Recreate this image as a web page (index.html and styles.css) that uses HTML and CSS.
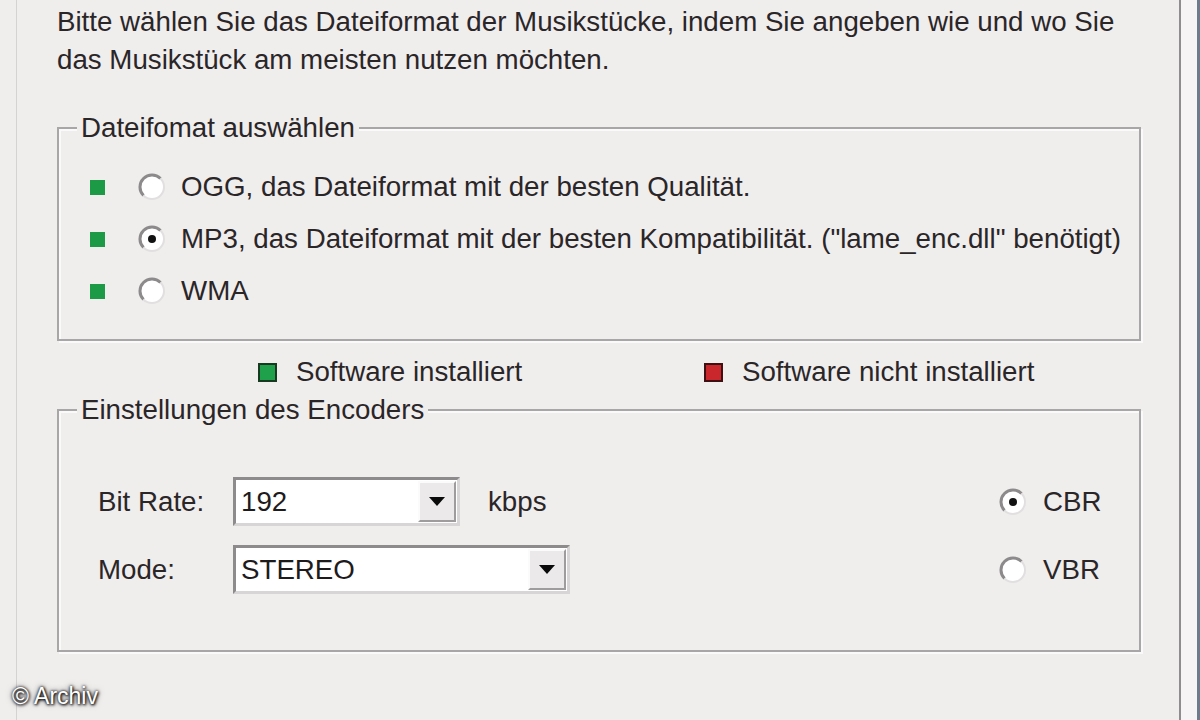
FILE: index.html
```html
<!DOCTYPE html>
<html lang="de">
<head>
<meta charset="utf-8">
<title>Dateiformat</title>
<link rel="stylesheet" href="styles.css">
</head>
<body>
<div class="panel">
  <p class="intro">Bitte wählen Sie das Dateiformat der Musikstücke, indem Sie angeben wie und wo Sie das Musikstück am meisten nutzen möchten.</p>

  <fieldset class="group group-format">
    <legend class="group-title">Dateifomat auswählen</legend>
    <div class="formats">
      <div class="fmt">
        <span class="sq sq-ok"></span>
        <svg class="radio" viewBox="0 0 28 28" width="28" height="28"><circle cx="14" cy="14" r="11.5" fill="#fff"/><path d="M5.5 22.5 A12 12 0 0 1 22.5 5.5" fill="none" stroke="#8d8a8b" stroke-width="3"/><path d="M22.5 5.5 A12 12 0 0 1 5.5 22.5" fill="none" stroke="#e2dfe0" stroke-width="2"/></svg>
        <span class="fmt-text">OGG, das Dateiformat mit der besten Qualität.</span>
      </div>
      <div class="fmt">
        <span class="sq sq-ok"></span>
        <svg class="radio" viewBox="0 0 28 28" width="28" height="28"><circle cx="14" cy="14" r="11.5" fill="#fff"/><path d="M5.5 22.5 A12 12 0 0 1 22.5 5.5" fill="none" stroke="#8d8a8b" stroke-width="3"/><path d="M22.5 5.5 A12 12 0 0 1 5.5 22.5" fill="none" stroke="#e2dfe0" stroke-width="2"/><circle cx="14" cy="14" r="4" fill="#111"/></svg>
        <span class="fmt-text">MP3, das Dateiformat mit der besten Kompatibilität. ("lame_enc.dll" benötigt)</span>
      </div>
      <div class="fmt">
        <span class="sq sq-ok"></span>
        <svg class="radio" viewBox="0 0 28 28" width="28" height="28"><circle cx="14" cy="14" r="11.5" fill="#fff"/><path d="M5.5 22.5 A12 12 0 0 1 22.5 5.5" fill="none" stroke="#8d8a8b" stroke-width="3"/><path d="M22.5 5.5 A12 12 0 0 1 5.5 22.5" fill="none" stroke="#e2dfe0" stroke-width="2"/></svg>
        <span class="fmt-text">WMA</span>
      </div>
    </div>
  </fieldset>

  <div class="status-row">
    <div class="status"><span class="key key-ok"></span><span>Software installiert</span></div>
    <div class="status"><span class="key key-no"></span><span>Software nicht installiert</span></div>
  </div>

  <fieldset class="group group-enc">
    <legend class="group-title">Einstellungen des Encoders</legend>
    <div class="enc">
      <div class="enc-left">
        <div class="enc-row">
          <span class="lbl">Bit Rate:</span>
          <div class="combo combo-rate"><span class="combo-val">192</span><span class="combo-btn"><span class="tri"></span></span></div>
          <span class="unit">kbps</span>
        </div>
        <div class="enc-row">
          <span class="lbl">Mode:</span>
          <div class="combo combo-mode"><span class="combo-val">STEREO</span><span class="combo-btn"><span class="tri"></span></span></div>
        </div>
      </div>
      <div class="modes">
        <div class="mode-row">
          <svg class="radio" viewBox="0 0 28 28" width="28" height="28"><circle cx="14" cy="14" r="11.5" fill="#fff"/><path d="M5.5 22.5 A12 12 0 0 1 22.5 5.5" fill="none" stroke="#8d8a8b" stroke-width="3"/><path d="M22.5 5.5 A12 12 0 0 1 5.5 22.5" fill="none" stroke="#e2dfe0" stroke-width="2"/><circle cx="14" cy="14" r="4" fill="#111"/></svg>
          <span>CBR</span>
        </div>
        <div class="mode-row">
          <svg class="radio" viewBox="0 0 28 28" width="28" height="28"><circle cx="14" cy="14" r="11.5" fill="#fff"/><path d="M5.5 22.5 A12 12 0 0 1 22.5 5.5" fill="none" stroke="#8d8a8b" stroke-width="3"/><path d="M22.5 5.5 A12 12 0 0 1 5.5 22.5" fill="none" stroke="#e2dfe0" stroke-width="2"/></svg>
          <span>VBR</span>
        </div>
      </div>
    </div>
  </fieldset>
</div>
<div class="strip"></div>
<div class="edge"></div>
<div class="credit">© Archiv</div>
</body>
</html>
```
FILE: styles.css
```css
html, body {
  margin: 0;
  padding: 0;
}
body {
  position: relative;
  width: 1200px;
  height: 720px;
  overflow: hidden;
  background: #f0eded;
  font-family: "Liberation Sans", Arial, sans-serif;
  font-size: 27.7px;
  color: #2a2628;
  display: flex;
}
.panel {
  margin-left: 16px;
  flex: 1;
  border-left: 1px solid #d6d2d3;
  border-right: 2px solid #8f8d8e;
  padding: 3px 38px 0 40px;
}
.strip {
  width: 16px;
  background: #f6f4f5;
}
.edge {
  width: 3px;
  background: #6e7b8d;
}
.intro {
  margin: 0;
  line-height: 38px;
}
.group {
  margin: 30px 0 0;
  padding: 0;
  border: 2px solid #a9a6a7;
  box-shadow: 2px 2px 0 #fbfafa, inset 2px 2px 0 #fbfafa;
  min-width: 0;
}
.group-title {
  margin-left: 18px;
  padding: 0 4px;
  line-height: 38px;
  background: #f0eded;
}
.formats {
  padding: 14px 0 22px 31px;
}
.fmt {
  display: flex;
  align-items: center;
  height: 52px;
}
.sq {
  width: 15px;
  height: 15px;
  flex: none;
}
.sq-ok {
  background: #1d9a46;
}
.radio {
  flex: none;
  display: block;
}
.fmt .radio {
  margin-left: 33px;
  margin-right: 15px;
}
.status-row {
  display: grid;
  grid-template-columns: 446px auto;
  padding-left: 201px;
  margin-top: 12px;
  height: 38px;
  align-items: center;
}
.status {
  display: flex;
  align-items: center;
  gap: 19px;
}
.key {
  width: 15px;
  height: 15px;
  border: 2px solid;
  flex: none;
}
.key-ok {
  background: #1fa04b;
  border-color: #173a20;
}
.key-no {
  background: #c9272b;
  border-color: #3e1012;
}
.group-enc {
  margin-top: 0;
}
.enc {
  display: flex;
  padding: 48px 0 56px 39px;
}
.enc-left {
  display: flex;
  flex-direction: column;
  gap: 19px;
}
.enc-row {
  display: flex;
  align-items: center;
  height: 49px;
}
.lbl {
  width: 135px;
}
.combo {
  box-sizing: border-box;
  height: 49px;
  display: flex;
  align-items: stretch;
  background: #fff;
  border-style: solid;
  border-width: 3px;
  border-color: #8e8b8c #d8d5d6 #d8d5d6 #8e8b8c;
}
.combo-rate {
  width: 227px;
}
.combo-mode {
  width: 337px;
}
.combo-val {
  flex: 1;
  display: flex;
  align-items: center;
  padding-left: 5px;
  color: #1e1b1d;
}
.combo-btn {
  width: 38px;
  box-sizing: border-box;
  margin: 1px;
  background: #ebe9e9;
  border-style: solid;
  border-width: 2px;
  border-color: #fbfbfb #9f9c9d #9f9c9d #fbfbfb;
  display: flex;
  align-items: center;
  justify-content: center;
}
.tri {
  width: 0;
  height: 0;
  border-left: 8px solid transparent;
  border-right: 8px solid transparent;
  border-top: 9px solid #0a0a0a;
}
.unit {
  margin-left: 28px;
}
.modes {
  margin-left: auto;
  width: 140px;
  display: flex;
  flex-direction: column;
  gap: 19px;
}
.mode-row {
  display: flex;
  align-items: center;
  height: 49px;
  gap: 16px;
}
.credit {
  position: absolute;
  left: 12px;
  top: 683px;
  font-size: 23px;
  color: #ffffff;
  text-shadow: 0 0 3px #000, 1px 1px 3px #000, 0 0 6px rgba(0,0,0,0.6);
}
```
